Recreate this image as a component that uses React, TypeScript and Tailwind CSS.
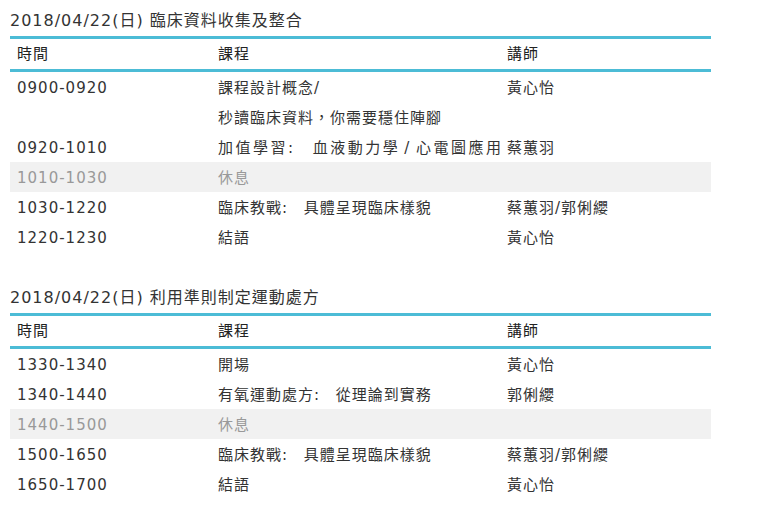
import React from "react";

type Row = { time: string; course: React.ReactNode; teacher: string; rest?: boolean; wide?: boolean };

const Colon = () => <span className="mr-[10px]">: </span>;

const sections: { title: string; rows: Row[] }[] = [
  {
    title: "2018/04/22(日) 臨床資料收集及整合",
    rows: [
      { time: "0900-0920", course: "課程設計概念/", teacher: "黃心怡" },
      { time: "", course: "秒讀臨床資料，你需要穩住陣腳", teacher: "" },
      {
        time: "0920-1010",
        course: (
          <>
            加值學習<Colon />血液動力學<span className="mx-[4px]">/</span>心電圖應用
          </>
        ),
        teacher: "蔡蕙羽",
        wide: true,
      },
      { time: "1010-1030", course: "休息", teacher: "", rest: true },
      {
        time: "1030-1220",
        course: (
          <>
            臨床教戰<Colon />具體呈現臨床樣貌
          </>
        ),
        teacher: "蔡蕙羽/郭俐纓",
      },
      { time: "1220-1230", course: "結語", teacher: "黃心怡" },
    ],
  },
  {
    title: "2018/04/22(日) 利用準則制定運動處方",
    rows: [
      { time: "1330-1340", course: "開場", teacher: "黃心怡" },
      {
        time: "1340-1440",
        course: (
          <>
            有氧運動處方<Colon />從理論到實務
          </>
        ),
        teacher: "郭俐纓",
      },
      { time: "1440-1500", course: "休息", teacher: "", rest: true },
      {
        time: "1500-1650",
        course: (
          <>
            臨床教戰<Colon />具體呈現臨床樣貌
          </>
        ),
        teacher: "蔡蕙羽/郭俐纓",
      },
      { time: "1650-1700", course: "結語", teacher: "黃心怡" },
    ],
  },
];

function Section({ title, rows }: { title: string; rows: Row[] }) {
  return (
    <div className="w-[701px]">
      <div className="h-[36px] pt-[6px] flex items-center text-[16px] tracking-[1px] text-[#333]">{title}</div>
      <div className="border-t-[3px] border-b-[3px] border-[#4cbcd6] h-[36px] pt-[1px] flex items-center text-[15px] tracking-[1px] text-[#222]">
        <div className="w-[201px] pl-[7px]">時間</div>
        <div className="w-[289px] pl-[7px]">課程</div>
        <div className="flex-1 pl-[7px]">講師</div>
      </div>
      {rows.map((r, i) => (
        <div
          key={i}
          className={
            r.rest
              ? "h-[30px] pt-[2px] flex items-center text-[15px] tracking-[1px] bg-[#f1f1f1] text-[#999]"
              : "h-[30px] pt-[2px] flex items-center text-[15px] tracking-[1px] text-[#333]"
          }
        >
          <div className="w-[201px] pl-[7px]">{r.time}</div>
          <div
            className={
              r.wide
                ? "w-[289px] pl-[7px] whitespace-nowrap tracking-[2.5px]"
                : "w-[289px] pl-[7px] whitespace-nowrap"
            }
          >
            {r.course}
          </div>
          <div className="flex-1 pl-[7px]">{r.teacher}</div>
        </div>
      ))}
    </div>
  );
}

export default function App() {
  return (
    <div
      className="w-[770px] h-[513px] bg-white pl-[10px] flex flex-col gap-[25px]"
      style={{ fontFamily: '"DejaVu Sans", "Noto Sans CJK TC", sans-serif' }}
    >
      {sections.map((s, i) => (
        <Section key={i} title={s.title} rows={s.rows} />
      ))}
    </div>
  );
}
